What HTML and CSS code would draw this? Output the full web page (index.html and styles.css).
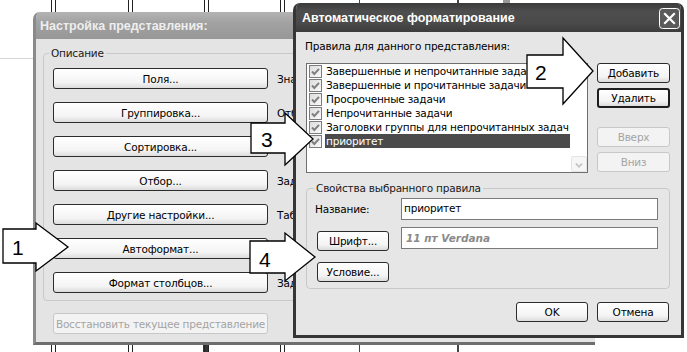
FILE: index.html
```html
<!DOCTYPE html>
<html lang="ru">
<head>
<meta charset="utf-8">
<title>Автоматическое форматирование</title>
<link rel="stylesheet" href="styles.css">
</head>
<body>
<div class="screen">
  <section class="win win-view">
    <header class="title title-inactive">Настройка представления:</header>
    <div class="view-body">
      <fieldset class="group group-desc">
        <legend>Описание</legend>
        <div class="row"><button class="btn btn-wide">Поля...</button><span class="side">Зна</span></div>
        <div class="row"><button class="btn btn-wide">Группировка...</button><span class="side">Отб</span></div>
        <div class="row"><button class="btn btn-wide">Сортировка...</button><span class="side">Зад</span></div>
        <div class="row"><button class="btn btn-wide">Отбор...</button><span class="side">Зад</span></div>
        <div class="row"><button class="btn btn-wide">Другие настройки...</button><span class="side">Таб</span></div>
        <div class="row"><button class="btn btn-wide">Автоформат...</button><span class="side">Зад</span></div>
        <div class="row"><button class="btn btn-wide">Формат столбцов...</button><span class="side">Зад</span></div>
      </fieldset>
      <button class="btn btn-wide btn-restore" disabled>Восстановить текущее представление</button>
    </div>
  </section>

  <section class="win win-auto">
    <header class="title title-active">
      <span class="title-text">Автоматическое форматирование</span>
      <span class="close">
        <svg width="21" height="21" viewBox="0 0 21 21"><rect x="0.5" y="0.5" width="20" height="20" rx="3" fill="#5a5a5a" stroke="#fff"/><path d="M6 6 L15 15 M15 6 L6 15" stroke="#fff" stroke-width="2.2" stroke-linecap="square"/></svg>
      </span>
    </header>
    <div class="auto-body">
      <div class="rules-label">Правила для данного представления:</div>
      <div class="rules">
        <div class="list">
          <div class="items">
            <div class="item"><span class="check"><svg width="13" height="13" viewBox="0 0 13 13"><path d="M3 6.5 L5.3 9 L10 3.8" fill="none" stroke="#808080" stroke-width="2"/></svg></span><span class="item-text">Завершенные и непрочитанные задачи</span></div>
            <div class="item"><span class="check"><svg width="13" height="13" viewBox="0 0 13 13"><path d="M3 6.5 L5.3 9 L10 3.8" fill="none" stroke="#808080" stroke-width="2"/></svg></span><span class="item-text">Завершенные и прочитанные задачи</span></div>
            <div class="item"><span class="check"><svg width="13" height="13" viewBox="0 0 13 13"><path d="M3 6.5 L5.3 9 L10 3.8" fill="none" stroke="#808080" stroke-width="2"/></svg></span><span class="item-text">Просроченные задачи</span></div>
            <div class="item"><span class="check"><svg width="13" height="13" viewBox="0 0 13 13"><path d="M3 6.5 L5.3 9 L10 3.8" fill="none" stroke="#808080" stroke-width="2"/></svg></span><span class="item-text">Непрочитанные задачи</span></div>
            <div class="item"><span class="check"><svg width="13" height="13" viewBox="0 0 13 13"><path d="M3 6.5 L5.3 9 L10 3.8" fill="none" stroke="#808080" stroke-width="2"/></svg></span><span class="item-text">Заголовки группы для непрочитанных задач</span></div>
            <div class="item"><span class="check"><svg width="13" height="13" viewBox="0 0 13 13"><path d="M3 6.5 L5.3 9 L10 3.8" fill="none" stroke="#808080" stroke-width="2"/></svg></span><span class="item-text selected">приоритет</span></div>
          </div>
          <div class="scroll">
            <span class="arrow"><svg width="16" height="16" viewBox="0 0 16 16"><path d="M4.5 9.5 L8 6 L11.5 9.5" fill="none" stroke="#c4c4c4" stroke-width="2"/></svg></span>
            <span class="arrow"><svg width="16" height="16" viewBox="0 0 16 16"><path d="M4.5 6.5 L8 10 L11.5 6.5" fill="none" stroke="#c4c4c4" stroke-width="2"/></svg></span>
          </div>
        </div>
        <div class="side-btns">
          <button class="btn btn-side">Добавить</button>
          <button class="btn btn-side btn-default gap-small">Удалить</button>
          <button class="btn btn-side gap-big" disabled>Вверх</button>
          <button class="btn btn-side gap-small" disabled>Вниз</button>
        </div>
      </div>

      <fieldset class="group group-props">
        <legend>Свойства выбранного правила</legend>
        <div class="props">
          <span class="prop-label">Название:</span>
          <div class="field field-name">приоритет</div>
          <button class="btn btn-prop btn-font">Шрифт...</button>
          <div class="field field-font">11 пт Verdana</div>
          <button class="btn btn-prop">Условие...</button>
        </div>
      </fieldset>

      <div class="footer">
        <button class="btn btn-foot">OK</button>
        <button class="btn btn-foot">Отмена</button>
      </div>
    </div>
  </section>

  <svg class="callouts" width="687" height="352" viewBox="0 0 687 352">
    <g fill="#fff" stroke="#000" stroke-width="1.3" stroke-linejoin="miter">
      <polygon points="3,229 36,229 36,223 68,247 36,271 36,263 3,263"/>
      <polygon points="527,55 563,55 563,38 593,71 563,104 563,88 527,88"/>
      <polygon points="251,123 285,123 285,113 313,139 285,165 285,153 251,153"/>
      <polygon points="250,241 285,241 285,233 315,257 285,281 285,273 250,273"/>
    </g>
    <g class="callout-num">
      <text x="12" y="255">1</text>
      <text x="535" y="80">2</text>
      <text x="261" y="147">3</text>
      <text x="259" y="267">4</text>
    </g>
  </svg>
</div>
</body>
</html>
```

FILE: styles.css
```css
* {
  box-sizing: border-box;
  margin: 0;
  padding: 0;
}

html, body {
  width: 687px;
  height: 352px;
  overflow: hidden;
  background: #fff;
}

body {
  font-family: "DejaVu Sans", sans-serif;
  font-size: 10.5px;
  letter-spacing: -0.2px;
  color: #000;
}

.screen {
  position: relative;
  width: 687px;
  height: 352px;
  background:
    linear-gradient(#222, #222) 51px 0 / 1px 100% no-repeat,
    linear-gradient(#222, #222) 55px 0 / 1px 100% no-repeat,
    linear-gradient(#222, #222) 128px 0 / 1px 100% no-repeat,
    linear-gradient(#222, #222) 132px 0 / 1px 100% no-repeat,
    linear-gradient(#222, #222) 204px 0 / 1px 100% no-repeat,
    linear-gradient(#222, #222) 208px 0 / 1px 100% no-repeat,
    linear-gradient(#333, #333) 203px 344px / 5px 8px no-repeat,
    linear-gradient(#222, #222) 280px 0 / 1px 100% no-repeat,
    linear-gradient(#222, #222) 284px 0 / 1px 100% no-repeat,
    linear-gradient(#444, #444) 359px 0 / 1px 100% no-repeat,
    linear-gradient(#444, #444) 457px 0 / 2px 100% no-repeat,
    linear-gradient(#999, #999) 503px 0 / 7px 10px no-repeat,
    linear-gradient(#d4d4d4, #d4d4d4) 0 58px / 33px 1px no-repeat,
    #fff;
}

/* ---------- windows ---------- */
.win {
  position: absolute;
  display: flex;
  flex-direction: column;
  overflow: hidden;
}

.title {
  flex: none;
  display: flex;
  align-items: center;
  font-family: "Liberation Sans", sans-serif;
  font-weight: bold;
  font-size: 12.5px;
  letter-spacing: 0;
  white-space: nowrap;
}

.win-view {
  left: 33px;
  top: 12px;
  width: 562px;
  height: 333px;
  background: #e4e4e4;
  border-left: 3px solid #8a8a8a;
  border-bottom: 3px solid #6e6e6e;
  border-radius: 7px 0 0 0;
}

.title-inactive {
  height: 27px;
  padding-left: 4px;
  color: #eeeeee;
  background: linear-gradient(#b3b3b3, #a2a2a2 40%, #979797);
}

.view-body {
  padding: 8px 0 0 7px;
  display: flex;
  flex-direction: column;
  align-items: flex-start;
}

.group {
  border: 1px solid #c9c9c9;
  border-radius: 4px;
}

.group legend {
  padding: 0 2px;
  line-height: 13px;
  color: #1a1a1a;
}

.group-desc {
  width: 560px;
  padding: 8px 0 7px 9px;
}

.group-desc legend {
  margin-left: -4px;
}

.row {
  display: flex;
  align-items: center;
  height: 21px;
  margin-bottom: 13px;
}

.row:last-child {
  margin-bottom: 0;
}

.side {
  margin-left: 9px;
}

/* ---------- buttons ---------- */
.btn {
  font-family: inherit;
  font-size: inherit;
  letter-spacing: inherit;
  color: #000;
  border: 1px solid #2c2c2c;
  border-radius: 3px;
  background: linear-gradient(#ffffff, #f4f4f4 70%, #dcdcdc);
  display: flex;
  align-items: center;
  justify-content: center;
  white-space: nowrap;
}

.btn:disabled {
  color: #a4a4a4;
  border-color: #c8c8c8;
  background: #f3f3f3;
}

.btn-wide {
  width: 215px;
  height: 21px;
}

.btn-restore {
  margin: 12px 0 0 10px;
}

/* ---------- auto format window ---------- */
.win-auto {
  left: 293px;
  top: 3px;
  width: 391px;
  height: 335px;
  background: #e6e6e6;
  border: 3px solid #363636;
  border-top: 0;
  border-radius: 7px 7px 0 0;
}

.title-active {
  height: 29px;
  padding: 0 1px 0 6px;
  color: #fff;
  background: linear-gradient(#3a3a3a, #4e4e4e 30%, #4a4a4a 70%, #3c3c3c);
  justify-content: space-between;
}

.close {
  display: flex;
  margin-top: 1px;
}

.auto-body {
  padding: 0 11px 0 10px;
  display: flex;
  flex-direction: column;
}

.rules-label {
  margin-top: 8px;
  margin-left: -1px;
  line-height: 13px;
}

.rules {
  margin-top: 10px;
  display: grid;
  grid-template-columns: 282px 73px;
  column-gap: 9px;
}

.list {
  height: 110px;
  border: 1px solid #6f6f6f;
  background: #fff;
  display: flex;
}

.items {
  flex: 1;
  padding-left: 2px;
  overflow: hidden;
}

.item {
  height: 14px;
  display: flex;
  align-items: center;
  white-space: nowrap;
}

.check {
  flex: none;
  width: 13px;
  height: 13px;
  border: 1px solid #7c7c7c;
  background: linear-gradient(135deg, #dcdcdc, #fafafa);
  display: flex;
  align-items: center;
  justify-content: center;
}

.check svg {
  flex: none;
}

.item-text {
  margin-left: 3px;
  padding-left: 1px;
  line-height: 14px;
  flex: 1;
  overflow: hidden;
}

.item-text.selected {
  background: #4b4b4b;
  color: #fff;
}

.scroll {
  flex: none;
  width: 17px;
  display: flex;
  flex-direction: column;
  justify-content: space-between;
  align-items: center;
}

.arrow {
  width: 16px;
  height: 16px;
  border: 1px solid #e4e4e4;
  border-radius: 2px;
  background: #f6f6f6;
  display: flex;
}

.side-btns {
  display: flex;
  flex-direction: column;
}

.btn-side {
  height: 20px;
  width: 73px;
}

.btn-default {
  border-width: 2px;
  border-color: #1e1e1e;
}

.gap-small {
  margin-top: 5px;
}

.gap-big {
  margin-top: 19px;
}

.group-props {
  margin-top: 9px;
  width: 364px;
  padding: 3px 0 10px 8px;
}

.group-props legend {
  margin-left: -1px;
}

.props {
  display: grid;
  grid-template-columns: 86px 257px;
  grid-template-rows: 22px 24px 20px;
  row-gap: 7px;
  align-items: center;
}

.props > .btn-prop:last-child {
  margin-top: 4px;
  align-self: start;
}

.field {
  height: 22px;
  border: 1px solid #7a7a7a;
  background: #fff;
  white-space: nowrap;
}

.field-name {
  padding: 3px 0 0 2px;
  line-height: 13px;
}

.field-font {
  align-self: start;
  display: flex;
  align-items: center;
  padding-left: 4px;
  font-weight: bold;
  font-style: italic;
  color: #8a8a8a;
  font-size: 10.5px;
  letter-spacing: 0;
}

.btn-prop {
  width: 72px;
  height: 20px;
  margin-left: 2px;
}

.btn-font {
  align-self: end;
}

.footer {
  margin-top: 13px;
  display: flex;
  justify-content: flex-end;
  gap: 9px;
  padding-right: 1px;
}

.btn-foot {
  width: 72px;
  height: 20px;
}

/* ---------- callouts ---------- */
.callouts {
  position: absolute;
  left: 0;
  top: 0;
}

.callout-num {
  font-family: "Liberation Sans", sans-serif;
  font-size: 21px;
  fill: #000;
}
```
